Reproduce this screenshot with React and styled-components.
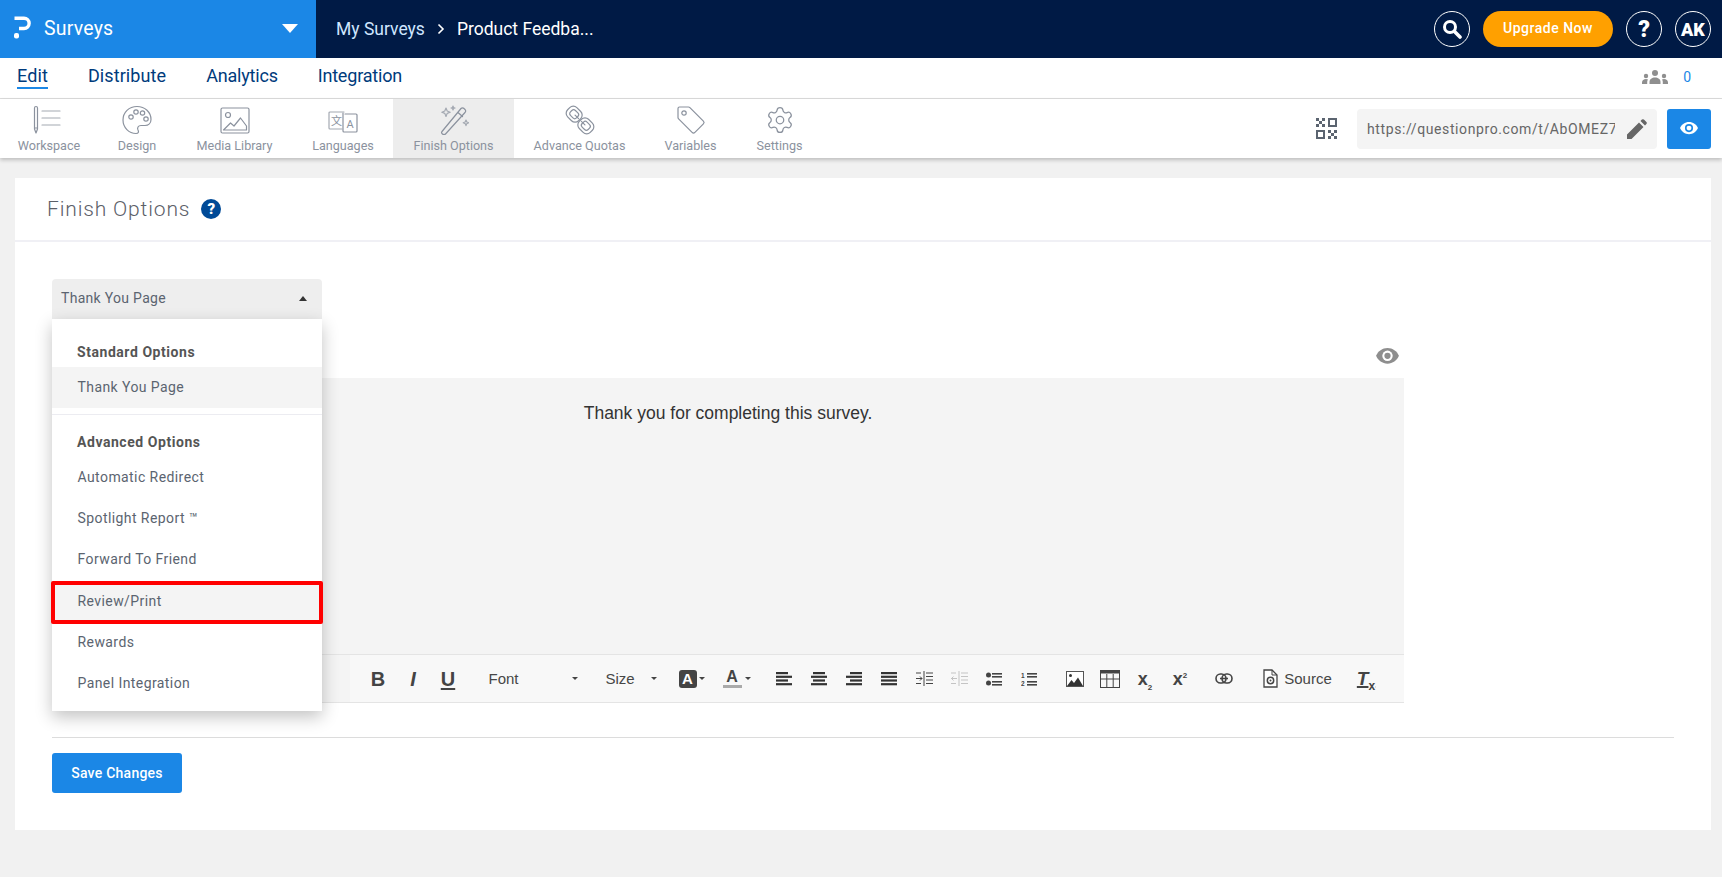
import React from 'react';
import styled, { createGlobalStyle } from 'styled-components';
import { Settings } from 'lucide-react';

const GlobalStyle = createGlobalStyle`
  html, body { margin: 0; padding: 0; background: #f1f1f1; height: 100%; overflow: hidden; }
  body { font-family: "Roboto", "Noto Sans", sans-serif; color: #555; }
  * { box-sizing: border-box; }
`;

const Page = styled.div`
  width: 1722px;
  height: 877px;
  display: flex;
  flex-direction: column;
`;

/* top bar */
const TopBar = styled.header`
  height: 58px;
  flex: none;
  display: flex;
  align-items: center;
  background: #001a45;
  color: #fff;
`;
const Brand = styled.div`
  width: 316px;
  height: 100%;
  display: flex;
  align-items: center;
  padding: 0 18px 2px 14px;
  background: #1b87e6;
`;
const BrandName = styled.span`
  margin-left: 13px;
  font-size: 19.5px;
  letter-spacing: 0.2px;
  flex: 1;
`;
const BrandCaret = styled.span`
  width: 0;
  height: 0;
  border-left: 8px solid transparent;
  border-right: 8px solid transparent;
  border-top: 9px solid #fff;
`;
const Crumbs = styled.nav`
  display: flex;
  align-items: center;
  margin-left: 20px;
  padding-bottom: 1px;
  font-size: 17.5px;
  flex: 1;
`;
const CrumbLink = styled.span`
  color: #cfe6ff;
`;
const CrumbSep = styled.span`
  display: flex;
  margin: 0 12px;
`;
const TopActions = styled.div`
  display: flex;
  align-items: center;
  margin-right: 11px;
  gap: 13px;
`;
const RoundButton = styled.div`
  width: 36px;
  height: 36px;
  border: 1px solid #fff;
  border-radius: 50%;
  display: flex;
  align-items: center;
  justify-content: center;
  font-weight: 900;
  font-size: ${p => p.$size || 18}px;
`;
const Upgrade = styled.div`
  width: 130px;
  height: 36px;
  border-radius: 18px;
  background: #ffa000;
  display: flex;
  align-items: center;
  justify-content: center;
  font-size: 14px;
  font-weight: 500;
  letter-spacing: 0.5px;
  padding-bottom: 3px;
`;

/* nav */
const NavRow = styled.div`
  height: 41px;
  flex: none;
  display: flex;
  align-items: center;
  background: #fff;
  border-bottom: 1px solid #ddd;
  padding: 0 17px 2px;
`;
const NavLink = styled.a`
  font-size: 18px;
  color: #003b7c;
  margin-right: 40px;
  letter-spacing: ${p => p.$tight ? -0.2 : 0.1}px;
  padding-bottom: 1px;
  border-bottom: 2px solid ${p => (p.$active ? '#1b87e6' : 'transparent')};
`;
const Responses = styled.div`
  margin-left: auto;
  display: flex;
  align-items: center;
  gap: 15px;
  padding-right: 14px;
  color: #1b87e6;
  font-size: 14px;
`;

/* tool row */
const ToolRow = styled.div`
  height: 59px;
  flex: none;
  display: flex;
  align-items: stretch;
  background: #fff;
  box-shadow: 0 2px 4px rgba(0, 0, 0, 0.22);
  padding-right: 11px;
`;
const Tab = styled.div`
  width: ${p => p.$w}px;
  display: flex;
  flex-direction: column;
  align-items: center;
  padding-top: 6px;
  font-size: 12.6px;
  color: #8b929e;
  white-space: nowrap;
  background: ${p => (p.$active ? '#ededed' : 'transparent')};
  svg { height: 30px; margin-bottom: 3px; flex: none; }
`;
const UrlArea = styled.div`
  margin-left: auto;
  display: flex;
  align-items: center;
`;
const UrlField = styled.div`
  width: 300px;
  height: 40px;
  margin-left: 20px;
  background: #f4f4f4;
  border-radius: 4px;
  display: flex;
  align-items: center;
  padding: 0 10px;
  color: #666;
  font-size: 14px;
`;
const UrlText = styled.span`
  flex: 1;
  overflow: hidden;
  white-space: nowrap;
  letter-spacing: 0.6px;
  margin-right: 12px;
`;
const PreviewButton = styled.div`
  width: 44px;
  height: 40px;
  margin-left: 10px;
  background: #1b87e6;
  border-radius: 3px;
  display: flex;
  align-items: center;
  justify-content: center;
`;

/* card */
const Card = styled.main`
  margin: 20px 11px 0 15px;
  background: #fff;
  height: 652px;
`;
const CardHead = styled.div`
  height: 64px;
  display: flex;
  align-items: center;
  gap: 11px;
  padding: 0 0 1px 32px;
  border-bottom: 2px solid #f0f0f5;
`;
const CardTitle = styled.h1`
  margin: 0;
  font-size: 21px;
  font-weight: 300;
  letter-spacing: 0.85px;
  color: #5c6068;
`;
const HelpDot = styled.span`
  width: 20px;
  height: 20px;
  border-radius: 50%;
  background: #004a97;
  color: #fff;
  display: flex;
  align-items: center;
  justify-content: center;
  font-size: 15px;
  font-weight: 900;
`;
const CardBody = styled.div`
  padding: 37px 37px 0;
`;
const SelectWrap = styled.div`
  position: relative;
  width: 270px;
`;
const SelectButton = styled.div`
  height: 40px;
  background: #eee;
  border-radius: 4px 4px 0 0;
  display: flex;
  align-items: center;
  justify-content: space-between;
  padding: 0 15px 2px 9px;
  font-size: 14px;
  letter-spacing: 0.3px;
  color: #5b6470;
`;
const CaretUp = styled.span`
  width: 0;
  height: 0;
  border-left: 4.5px solid transparent;
  border-right: 4.5px solid transparent;
  border-bottom: 5px solid #333;
`;
const Menu = styled.div`
  position: absolute;
  z-index: 5;
  top: 40px;
  left: 0;
  width: 270px;
  height: 392px;
  background: #fff;
  padding-top: 18px;
  box-shadow: 0 6px 16px rgba(0, 0, 0, 0.24);
`;
const MenuHead = styled.div`
  height: 30px;
  display: flex;
  align-items: center;
  padding-left: 25px;
  font-size: 14px;
  font-weight: 700;
  letter-spacing: 0.55px;
  color: #555;
`;
const MenuItem = styled.div`
  position: relative;
  height: 41.25px;
  display: flex;
  align-items: center;
  padding: 0 0 2px 25.5px;
  font-size: 14px;
  letter-spacing: 0.42px;
  color: #5b6470;
  background: ${p => (p.$hover ? '#f4f4f4' : 'transparent')};
  ${p => p.$marked && `
    &::after {
      content: '';
      position: absolute;
      left: -1px;
      right: -1px;
      top: 0;
      bottom: -2px;
      border: 4px solid #f00;
      border-radius: 2px;
    }
  `}
`;
const MenuRule = styled.div`
  height: 1px;
  margin: 6px 0 12px;
  background: #ececf1;
`;
const EyeRow = styled.div`
  width: 1352px;
  height: 59px;
  display: flex;
  justify-content: flex-end;
  align-items: flex-end;
  padding: 0 5px 14px 0;
`;
const Editor = styled.div`
  width: 1352px;
  height: 276px;
  background: #f4f4f4;
  padding-top: 25px;
  text-align: center;
  font-family: "Liberation Sans", Arial, sans-serif;
  font-size: 17.5px;
  color: #333;
`;
const EditorBar = styled.div`
  width: 1352px;
  height: 49px;
  display: flex;
  background: #f4f4f4;
  padding-left: 298px;
  border-top: 1px solid #e4e4e4;
  border-bottom: 1px solid #e4e4e4;
`;
const EditorTools = styled.div`
  flex: 1;
  display: flex;
  align-items: center;
  background: #f8f8f8;
  padding-left: 10.5px;
  font-family: "Liberation Sans", Arial, sans-serif;
  color: #444;
`;
const Tool = styled.span`
  width: ${p => p.$w || 35}px;
  margin-left: ${p => p.$ml || 0}px;
  flex: none;
  display: flex;
  align-items: center;
  justify-content: center;
  color: ${p => (p.$off ? '#c4c4c4' : '#444')};
`;
const Letter = styled.span`
  font-size: ${p => p.$size || 20}px;
  font-weight: 700;
  font-style: ${p => (p.$italic ? 'italic' : 'normal')};
  text-decoration: ${p => (p.$under ? 'underline' : 'none')};
  text-underline-offset: 2px;
  text-decoration-thickness: 2px;
  line-height: 1;
`;
const Combo = styled.span`
  width: ${p => p.$w}px;
  margin-left: ${p => p.$ml}px;
  flex: none;
  display: flex;
  align-items: center;
  justify-content: space-between;
  font-size: 15px;
  color: #474747;
`;
const SmallCaret = styled.span`
  width: 0;
  height: 0;
  margin-left: ${p => p.$ml || 0}px;
  border-left: 3px solid transparent;
  border-right: 3px solid transparent;
  border-top: 3px solid #444;
`;
const HighlightA = styled.span`
  width: 18px;
  height: 18px;
  background: #444;
  color: #fff;
  border-radius: 3px;
  display: flex;
  align-items: center;
  justify-content: center;
  font-size: 15px;
  font-weight: 700;
`;
const ColorA = styled.span`
  width: 19px;
  height: 18px;
  border-bottom: 3px solid #aaa;
  text-align: center;
  font-size: 16px;
  font-weight: 700;
  line-height: 14px;
`;
const ScriptX = styled.span`
  font-size: 18px;
  font-weight: 700;
  line-height: 1;
  sub, sup { font-size: 8px; line-height: 0; }
`;
const SourceLabel = styled.span`
  font-size: 15px;
  margin-left: 6px;
  color: #474747;
`;
const ClearT = styled.span`
  font-size: 19px;
  font-weight: 700;
  font-style: italic;
  text-decoration: underline;
  text-decoration-thickness: 2px;
  line-height: 1;
  sub { font-size: 12px; font-style: normal; line-height: 0; }
`;
const Rule = styled.hr`
  border: 0;
  height: 1px;
  margin: 34px 0 15px;
  background: #dcdcdc;
`;
const SaveButton = styled.button`
  width: 130px;
  height: 40px;
  border: 0;
  border-radius: 3px;
  background: #1b87e6;
  color: #fff;
  font: 500 14px "Roboto", sans-serif;
  letter-spacing: 0.25px;
  padding-bottom: 2px;
`;

/* drawings */
const Line = { fill: 'none', stroke: '#8b929e', strokeWidth: 1.2, strokeLinecap: 'round', strokeLinejoin: 'round' };

const Logo = () => (
  <svg width="17" height="24" viewBox="0 0 17 24">
    <path d="M0.500 2.200h9.500a5 5 0 0 1 0 10.300H5" fill="none" stroke="#fff" strokeWidth="3.400" />
    <rect x="0" y="17" width="5" height="5.500" rx="2" fill="#fff" />
  </svg>
);
const SearchGlyph = () => (
  <svg width="20" height="20" viewBox="0 0 20 20" fill="none" stroke="#fff">
    <circle cx="8" cy="8" r="5.500" strokeWidth="3" />
    <path d="M12.500 12.500L18 18" strokeWidth="3.600" strokeLinecap="round" />
  </svg>
);
const ChevronGlyph = () => (
  <svg width="8" height="12" viewBox="0 0 8 12" fill="none" stroke="#fff" strokeWidth="1.600">
    <path d="M1.500 1.500L6 6l-4.500 4.500" />
  </svg>
);
const PencilGlyph = () => (
  <svg width="20" height="20" viewBox="0 0 20 20" fill="#666">
    <path d="M0 20v-4.500L12 3.500l4.500 4.500L4.500 20zM13.500 2l1.400-1.400a1.500 1.500 0 0 1 2 0l2.500 2.500a1.500 1.500 0 0 1 0 2L18 6.500z" />
  </svg>
);
const WorkspaceIcon = () => (
  <svg width="32" height="30" viewBox="0 0 32 30" {...Line}>
    <path d="M1.500 3a1.500 1.500 0 0 1 3 0v21l-1.500 4-1.500-4zM1.500 23h3" />
    <path d="M9 6h18M9 13h18M9 20h18" stroke="#a4a9b2" />
  </svg>
);
const PaletteIcon = () => (
  <svg width="30" height="30" viewBox="0 0 30 30" {...Line}>
    <path d="M15 1.500C7 1.500 1 7.500 1 15c0 7.500 6 13.500 13 13.500 2.500 0 3-1.800 2-3.500-1-2 0-4.500 3-4.500h4c3.500 0 6-2.500 6-6C29 7 23 1.500 15 1.500z" />
    <circle cx="9" cy="12" r="2.200" />
    <circle cx="14" cy="7" r="2.200" />
    <circle cx="20.500" cy="8" r="2.200" />
    <circle cx="24" cy="14" r="2.200" />
  </svg>
);
const MediaIcon = () => (
  <svg width="30" height="30" viewBox="0 0 30 30" {...Line}>
    <rect x="1" y="3" width="28" height="25" rx="1.500" />
    <circle cx="8" cy="10" r="2.500" />
    <path d="M3.500 25l7-7 3.500 3 6.500-8 6 8v4z" />
  </svg>
);
const LanguageIcon = () => (
  <svg width="30" height="30" viewBox="0 0 30 30" {...Line}>
    <path d="M16 7H2a1 1 0 0 0-1 1v15a1 1 0 0 0 1 1h12" stroke="#a4a9b2" />
    <path d="M17 9h11a1 1 0 0 1 1 1v16a1 1 0 0 1-1 1H16a1 1 0 0 1-1-1V8" />
    <text x="8.500" y="20" fontSize="11" textAnchor="middle" fill="#8b929e" stroke="none" fontFamily="Noto Sans CJK SC">文</text>
    <text x="22" y="22.500" fontSize="11" textAnchor="middle" fill="#8b929e" stroke="none" fontFamily="Roboto">A</text>
  </svg>
);
const WandIcon = () => (
  <svg width="30" height="30" viewBox="0 0 30 30" {...Line}>
    <path d="M3 26.500L22 3.500a2 2 0 0 1 3 0l1 1a2 2 0 0 1 0 3L6.500 29a2 2 0 0 1-3 0l-.5-.5a1.500 1.500 0 0 1 0-2zM19 7.500l4.500 4" />
    <path d="M7 3l1.200 3 3 1.200-3 1.200L7 11.500 5.800 8.400l-3-1.200 3-1.200zM27 15l.8 2 2 .8-2 .8-.8 2-.8-2-2-.8 2-.8zM14 1l.5 1.500L16 3l-1.500.5L14 5l-.5-1.500L12 3l1.500-.5z" stroke="#a4a9b2" />
  </svg>
);
const ChainIcon = () => (
  <svg width="30" height="30" viewBox="0 0 30 30" {...Line}>
    <g transform="rotate(-45 15 15)">
      <rect x="8.500" y="-1" width="13" height="15.500" rx="5" />
      <rect x="11.500" y="2.500" width="7" height="8.500" rx="2.500" />
      <rect x="8.500" y="15.500" width="13" height="15.500" rx="5" />
      <rect x="11.500" y="19" width="7" height="8.500" rx="2.500" />
      <path d="M15 8v5M15 17v5" />
    </g>
  </svg>
);
const TagIcon = () => (
  <svg width="30" height="30" viewBox="0 0 30 30" {...Line}>
    <path d="M2 3.500A1.500 1.500 0 0 1 3.500 2h9a2 2 0 0 1 1.400.6l13.500 13.500a2 2 0 0 1 0 2.800l-8.500 8.500a2 2 0 0 1-2.800 0L2.600 13.900A2 2 0 0 1 2 12.500z" />
    <circle cx="8" cy="8" r="2.200" />
  </svg>
);
const QrIcon = () => (
  <svg width="21" height="21" viewBox="0 0 21 21" fill="#5b6470">
    <path d="M0 0h3v3H0zM6 0h3v3H6zM0 6h3v3H0zM3 3h3v3H3zM6 6h3v3H6z" />
    <path fillRule="evenodd" d="M12 0h9v9h-9zM14 2v5h5V2zM0 12h9v9H0zM2 14v5h5v-5z" />
    <path d="M12 12h3v3h-3zM18 12h3v3h-3zM15 15h3v3h-3zM12 18h3v3h-3zM18 18h3v3h-3z" />
  </svg>
);
const EyeIcon = ({ color, ring, w }) => (
  <svg width={w} height={w * 0.68} viewBox="0 0 22 15">
    <path d="M11 0C6 0 2 3 0 7.500 2 12 6 15 11 15s9-3 11-7.500C20 3 16 0 11 0z" fill={color} />
    <circle cx="11" cy="7.500" r="5" fill={ring} />
    <circle cx="11" cy="7.500" r="3" fill={color} />
  </svg>
);
const PeopleIcon = () => (
  <svg width="26" height="14" viewBox="0 0 26 14" fill="#8f8f8f">
    <circle cx="13" cy="3" r="3" />
    <path d="M7.500 14v-2c0-3 2.500-4.500 5.500-4.500s5.500 1.500 5.500 4.500v2z" />
    <circle cx="4" cy="6" r="2.200" />
    <path d="M0 14v-1.500C0 10.500 1.800 9 4 9c1 0 1.600.2 2 .5-.6.800-.8 1.600-.8 2.500v2z" />
    <circle cx="22" cy="6" r="2.200" />
    <path d="M26 14v-1.500C26 10.500 24.200 9 22 9c-1 0-1.600.2-2 .5.600.800.800 1.600.800 2.500v2z" />
  </svg>
);
const Bars = ({ rows, color = '#333' }) => (
  <svg width="16" height="14" viewBox="0 0 16 14" fill={color}>
    {rows.map(([x, w], i) => <rect key={i} x={x} y={i * 3.700} width={w} height="2.200" />)}
  </svg>
);
const IndentIcon = ({ off }) => (
  <svg width="17" height="15" viewBox="0 0 17 15" fill="none" stroke={off ? '#c4c4c4' : '#444'}>
    <path d="M8 0v15" />
    <path d="M10 2h7M10 5.500h7M10 9h7M10 12.500h7M0 2h5M0 12.500h5" strokeWidth="1" />
    <path d={off ? 'M0 7.500h6M2.500 5.500l-2 2 2 2' : 'M0 7.500h6M4 5.500l2 2-2 2'} />
  </svg>
);
const ListIcon = ({ numbered }) => (
  <svg width="16" height="14" viewBox="0 0 16 14" fill="#444">
    {numbered ? (
      <>
        <text x="0" y="6" fontSize="6.500" fontFamily="Liberation Sans" fontWeight="700">1</text>
        <text x="0" y="13.500" fontSize="6.500" fontFamily="Liberation Sans" fontWeight="700">2</text>
      </>
    ) : (
      <>
        <circle cx="2.500" cy="3" r="2.500" />
        <circle cx="2.500" cy="11" r="2.500" />
      </>
    )}
    <rect x="6" y="1" width="10" height="1.600" />
    <rect x="6" y="4" width="10" height="1.600" />
    <rect x="6" y="9" width="10" height="1.600" />
    <rect x="6" y="12" width="10" height="1.600" />
  </svg>
);
const ImageIcon = () => (
  <svg width="18" height="16" viewBox="0 0 18 16">
    <rect x="0.500" y="0.500" width="17" height="15" fill="#fff" stroke="#555" />
    <circle cx="4.500" cy="4.500" r="1.500" fill="#333" />
    <path d="M1 15l4.500-6 2.500 3 4-5.500 5 8.500z" fill="#333" />
  </svg>
);
const TableIcon = () => (
  <svg width="20" height="18" viewBox="0 0 20 18" fill="none" stroke="#444">
    <rect x="0.500" y="0.500" width="19" height="17" />
    <path d="M0 2h20" strokeWidth="3" />
    <path d="M0 9h20M6.800 4v14M13.200 4v14" />
  </svg>
);
const LinkIcon = () => (
  <svg width="18" height="11" viewBox="0 0 18 11" fill="none" stroke="#444" strokeWidth="1.600">
    <rect x="1" y="1" width="10" height="9" rx="4.500" />
    <rect x="7" y="1" width="10" height="9" rx="4.500" />
    <path d="M5 5.500h8" />
  </svg>
);
const SourceIcon = () => (
  <svg width="15" height="19" viewBox="0 0 15 19">
    <path d="M1 1h8l5 5v12H1z" fill="#fff" stroke="#444" strokeWidth="1.300" />
    <path d="M9 1v5h5" fill="none" stroke="#444" />
    <circle cx="7.500" cy="11.500" r="3.200" fill="none" stroke="#444" strokeWidth="1.500" />
    <circle cx="7.500" cy="11.500" r="1" fill="#444" />
  </svg>
);

const tabs = [
  { label: 'Workspace', w: 98, icon: <WorkspaceIcon /> },
  { label: 'Design', w: 78, icon: <PaletteIcon /> },
  { label: 'Media Library', w: 117, icon: <MediaIcon /> },
  { label: 'Languages', w: 100, icon: <LanguageIcon /> },
  { label: 'Finish Options', w: 121, icon: <WandIcon />, active: true },
  { label: 'Advance Quotas', w: 131, icon: <ChainIcon /> },
  { label: 'Variables', w: 91, icon: <TagIcon /> },
  { label: 'Settings', w: 87, icon: <Settings size={30} strokeWidth={1} color="#8b929e" /> },
];
const redirects = ['Automatic Redirect', 'Spotlight Report ™', 'Forward To Friend', 'Review/Print', 'Rewards', 'Panel Integration'];

export default function App() {
  return (
    <Page>
      <GlobalStyle />
      <TopBar>
        <Brand>
          <Logo />
          <BrandName>Surveys</BrandName>
          <BrandCaret />
        </Brand>
        <Crumbs>
          <CrumbLink>My Surveys</CrumbLink>
          <CrumbSep><ChevronGlyph /></CrumbSep>
          <span>Product Feedba...</span>
        </Crumbs>
        <TopActions>
          <RoundButton><SearchGlyph /></RoundButton>
          <Upgrade>Upgrade Now</Upgrade>
          <RoundButton $size={23}>?</RoundButton>
          <RoundButton $size={18}>AK</RoundButton>
        </TopActions>
      </TopBar>

      <NavRow>
        <NavLink $active>Edit</NavLink>
        <NavLink>Distribute</NavLink>
        <NavLink $tight>Analytics</NavLink>
        <NavLink $tight>Integration</NavLink>
        <Responses><PeopleIcon />0</Responses>
      </NavRow>

      <ToolRow>
        {tabs.map(t => (
          <Tab key={t.label} $w={t.w} $active={t.active}>{t.icon}{t.label}</Tab>
        ))}
        <UrlArea>
          <QrIcon />
          <UrlField>
            <UrlText>https://questionpro.com/t/AbOMEZ7</UrlText>
            <PencilGlyph />
          </UrlField>
          <PreviewButton><EyeIcon color="#fff" ring="#1b87e6" w={18} /></PreviewButton>
        </UrlArea>
      </ToolRow>

      <Card>
        <CardHead>
          <CardTitle>Finish Options</CardTitle>
          <HelpDot>?</HelpDot>
        </CardHead>
        <CardBody>
          <SelectWrap>
            <SelectButton>Thank You Page<CaretUp /></SelectButton>
            <Menu>
              <MenuHead>Standard Options</MenuHead>
              <MenuItem $hover>Thank You Page</MenuItem>
              <MenuRule />
              <MenuHead>Advanced Options</MenuHead>
              {redirects.map(r => (
                <MenuItem key={r} $hover={r === 'Review/Print'} $marked={r === 'Review/Print'}>{r}</MenuItem>
              ))}
            </Menu>
          </SelectWrap>
          <EyeRow><EyeIcon color="#8e8e8e" ring="#fff" w={23} /></EyeRow>
          <Editor>Thank you for completing this survey.</Editor>
          <EditorBar>
            <EditorTools>
              <Tool><Letter>B</Letter></Tool>
              <Tool><Letter $italic>I</Letter></Tool>
              <Tool><Letter $under>U</Letter></Tool>
              <Combo $w={89} $ml={23}>Font<SmallCaret /></Combo>
              <Combo $w={51} $ml={28}>Size<SmallCaret /></Combo>
              <Tool $w={34} $ml={18}><HighlightA>A</HighlightA><SmallCaret $ml={2} /></Tool>
              <Tool $w={34} $ml={11}><ColorA>A</ColorA><SmallCaret $ml={3} /></Tool>
              <Tool $ml={13}><Bars rows={[[0, 12], [0, 16], [0, 12], [0, 16]]} /></Tool>
              <Tool><Bars rows={[[2, 12], [0, 16], [2, 12], [0, 16]]} /></Tool>
              <Tool><Bars rows={[[4, 12], [0, 16], [4, 12], [0, 16]]} /></Tool>
              <Tool><Bars rows={[[0, 16], [0, 16], [0, 16], [0, 16]]} /></Tool>
              <Tool><IndentIcon /></Tool>
              <Tool $off><IndentIcon off /></Tool>
              <Tool><ListIcon /></Tool>
              <Tool><ListIcon numbered /></Tool>
              <Tool $ml={11}><ImageIcon /></Tool>
              <Tool><TableIcon /></Tool>
              <Tool><ScriptX>x<sub>2</sub></ScriptX></Tool>
              <Tool><ScriptX>x<sup>2</sup></ScriptX></Tool>
              <Tool $ml={9}><LinkIcon /></Tool>
              <Tool $w={80} $ml={16}><SourceIcon /><SourceLabel>Source</SourceLabel></Tool>
              <Tool $ml={11}><ClearT>T<sub>x</sub></ClearT></Tool>
            </EditorTools>
          </EditorBar>
          <Rule />
          <SaveButton>Save Changes</SaveButton>
        </CardBody>
      </Card>
    </Page>
  );
}
